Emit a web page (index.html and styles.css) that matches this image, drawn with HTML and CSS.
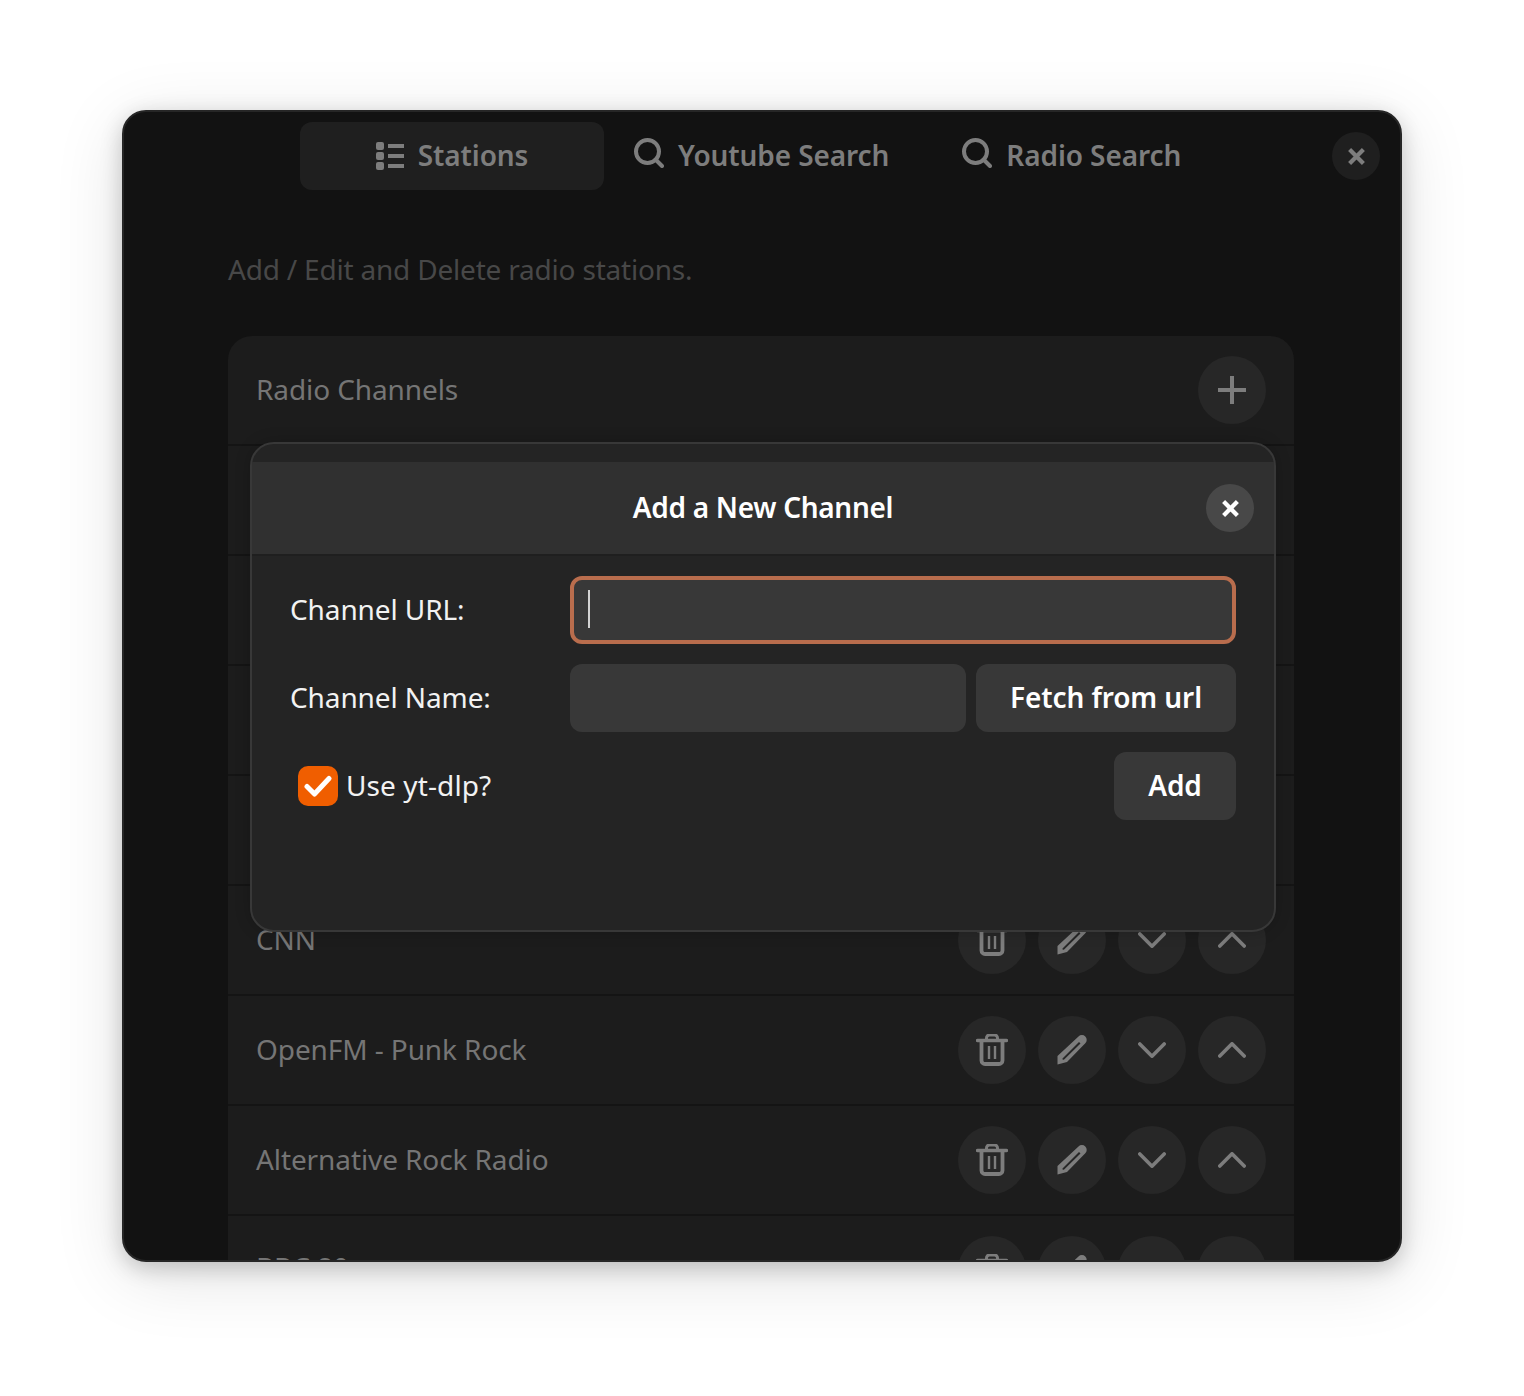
FILE: index.html
```html
<!DOCTYPE html>
<html lang="en">

<head>
    <meta charset="UTF-8">
    <meta name="viewport" content="width=device-width, initial-scale=1.0">
    <title>Radio Settings</title>
    <link rel="stylesheet" href="styles.css">
</head>

<body>

    <svg class="icon-defs" width="0" height="0">
        <symbol id="i-list" viewBox="0 0 28 28">
            <rect x="0" y="0" width="8" height="8" rx="2" />
            <rect x="0" y="10" width="8" height="8" rx="2" />
            <rect x="0" y="20" width="8" height="8" rx="2" />
            <rect x="12" y="2" width="16" height="4" />
            <rect x="12" y="12" width="16" height="4" />
            <rect x="12" y="22" width="16" height="4" />
        </symbol>
        <symbol id="i-search" viewBox="0 0 30 30">
            <circle cx="13.500" cy="13.500" r="11.500" fill="none" stroke="currentColor" stroke-width="4" />
            <path d="M21.500 21.500l6.500 6.500" fill="none" stroke="currentColor" stroke-width="4" stroke-linecap="round" />
        </symbol>
        <symbol id="i-close" viewBox="0 0 16 16">
            <path d="M1.500 1.500l13 13M14.500 1.500l-13 13" fill="none" stroke="currentColor" stroke-width="4" />
        </symbol>
        <symbol id="i-plus" viewBox="0 0 28 28">
            <path d="M14 0v28M0 14h28" fill="none" stroke="currentColor" stroke-width="4" />
        </symbol>
        <symbol id="i-trash" viewBox="0 0 32 32">
            <path d="M1.500 6.500h29" fill="none" stroke="currentColor" stroke-width="3.400" stroke-linecap="round" />
            <path d="M10.500 5.500v-1.500a3 3 0 0 1 3-3h5a3 3 0 0 1 3 3v1.500" fill="none" stroke="currentColor" stroke-width="3" />
            <path d="M5.500 7v19.500a3.500 3.500 0 0 0 3.500 3.500h14a3.500 3.500 0 0 0 3.500-3.500v-19.500" fill="none" stroke="currentColor" stroke-width="3.800" />
            <path d="M13 12v13M19 12v13" fill="none" stroke="currentColor" stroke-width="2.400" />
        </symbol>
        <symbol id="i-edit" viewBox="0 0 30 30">
            <path fill-rule="evenodd" d="M21.500 1.500a4.800 4.800 0 0 1 6.800 6.800L10 27l-9.500 2.500V21zM22 7L5.500 23.400v1.200l1.400.100L23.500 8.500z" />
        </symbol>
        <symbol id="i-down" viewBox="0 0 28 16">
            <path d="M1.800 2l12.200 12.200L26.200 2" fill="none" stroke="currentColor" stroke-width="3.600" stroke-linecap="round" stroke-linejoin="round" />
        </symbol>
        <symbol id="i-up" viewBox="0 0 28 16">
            <path d="M1.800 14L14 1.800 26.200 14" fill="none" stroke="currentColor" stroke-width="3.600" stroke-linecap="round" stroke-linejoin="round" />
        </symbol>
        <symbol id="i-check" viewBox="0 0 28 22">
            <path d="M3 11.500l7.500 7.500L25 3.500" fill="none" stroke="currentColor" stroke-width="5" stroke-linecap="round" stroke-linejoin="round" />
        </symbol>
    </svg>

    <div class="window">
        <header class="tabbar">
            <div class="tab tab-active">
                <svg class="icon-list"><use href="#i-list" /></svg>
                <span>Stations</span>
            </div>
            <div class="tab tab-youtube">
                <svg class="icon-search"><use href="#i-search" /></svg>
                <span>Youtube Search</span>
            </div>
            <div class="tab tab-radio">
                <svg class="icon-search"><use href="#i-search" /></svg>
                <span>Radio Search</span>
            </div>
            <button class="round-btn window-close"><svg class="icon-close"><use href="#i-close" /></svg></button>
        </header>

        <p class="subtitle">Add / Edit and Delete radio stations.</p>

        <div class="listbox">
            <div class="row row-head">
                <span class="row-name">Radio Channels</span>
                <div class="row-actions">
                    <button class="round-btn"><svg class="icon-plus"><use href="#i-plus" /></svg></button>
                </div>
            </div>
            <!-- these four are fully covered by the dialog -->
            <div class="row"></div>
            <div class="row"></div>
            <div class="row"></div>
            <div class="row"></div>
            <div class="row">
                <span class="row-name">CNN</span>
                <div class="row-actions">
                    <button class="round-btn"><svg class="icon-trash"><use href="#i-trash" /></svg></button>
                    <button class="round-btn"><svg class="icon-edit"><use href="#i-edit" /></svg></button>
                    <button class="round-btn"><svg class="icon-chevron"><use href="#i-down" /></svg></button>
                    <button class="round-btn"><svg class="icon-chevron"><use href="#i-up" /></svg></button>
                </div>
            </div>
            <div class="row">
                <span class="row-name">OpenFM - Punk Rock</span>
                <div class="row-actions">
                    <button class="round-btn"><svg class="icon-trash"><use href="#i-trash" /></svg></button>
                    <button class="round-btn"><svg class="icon-edit"><use href="#i-edit" /></svg></button>
                    <button class="round-btn"><svg class="icon-chevron"><use href="#i-down" /></svg></button>
                    <button class="round-btn"><svg class="icon-chevron"><use href="#i-up" /></svg></button>
                </div>
            </div>
            <div class="row">
                <span class="row-name">Alternative Rock Radio</span>
                <div class="row-actions">
                    <button class="round-btn"><svg class="icon-trash"><use href="#i-trash" /></svg></button>
                    <button class="round-btn"><svg class="icon-edit"><use href="#i-edit" /></svg></button>
                    <button class="round-btn"><svg class="icon-chevron"><use href="#i-down" /></svg></button>
                    <button class="round-btn"><svg class="icon-chevron"><use href="#i-up" /></svg></button>
                </div>
            </div>
            <div class="row">
                <span class="row-name">BBC 80</span>
                <div class="row-actions">
                    <button class="round-btn"><svg class="icon-trash"><use href="#i-trash" /></svg></button>
                    <button class="round-btn"><svg class="icon-edit"><use href="#i-edit" /></svg></button>
                    <button class="round-btn"><svg class="icon-chevron"><use href="#i-down" /></svg></button>
                    <button class="round-btn"><svg class="icon-chevron"><use href="#i-up" /></svg></button>
                </div>
            </div>
        </div>

        <div class="dialog">
            <div class="dialog-title">
                <h2>Add a New Channel</h2>
                <button class="round-btn dialog-close"><svg class="icon-close"><use href="#i-close" /></svg></button>
            </div>
            <div class="dialog-body">
                <div class="form-row">
                    <label class="form-label">Channel URL:</label>
                    <div class="field field-focus"><span class="caret"></span></div>
                </div>
                <div class="form-row">
                    <label class="form-label">Channel Name:</label>
                    <div class="field field-name"></div>
                    <button class="btn btn-fetch">Fetch from url</button>
                </div>
                <div class="form-row form-row-last">
                    <label class="check-label">
                        <span class="checkbox"><svg class="icon-check"><use href="#i-check" /></svg></span>
                        Use yt-dlp?
                    </label>
                    <button class="btn btn-add">Add</button>
                </div>
            </div>
        </div>
    </div>

</body>

</html>
```

FILE: styles.css
```css
* {
    padding: 0;
    margin: 0;
    box-sizing: border-box;
}

body {
    background-color: #fff;
    padding: 110px 122px;
    font-family: "Noto Sans", sans-serif;
    font-size: 28px;
    letter-spacing: -0.1px;
}

.icon-defs {
    position: absolute;
}

svg {
    display: block;
    fill: currentColor;
}

.window {
    position: relative;
    width: 1280px;
    height: 1152px;
    overflow: hidden;
    background-color: #121212;
    border: 2px solid #262626;
    border-radius: 24px;
    padding: 0 106px 0 104px;
    box-shadow: 0 6px 22px rgba(0, 0, 0, 0.2), 0 14px 70px rgba(0, 0, 0, 0.12);
}

/* top tabs */
.tabbar {
    display: flex;
    align-items: center;
    height: 68px;
    margin-top: 10px;
    margin-left: 72px;
    color: #7d7d7d;
    font-weight: 600;
}

.tab {
    display: flex;
    align-items: center;
    height: 68px;
}

.tab span {
    padding-bottom: 2px;
}

.tab-active {
    justify-content: center;
    gap: 14px;
    width: 304px;
    background-color: #1f1f1f;
    border-radius: 12px;
}

.tab-youtube {
    gap: 14px;
    margin-left: 30px;
}

.tab-radio {
    gap: 14px;
    margin-left: 73px;
}

.icon-list {
    width: 28px;
    height: 28px;
}

.icon-search {
    width: 30px;
    height: 30px;
    margin-top: -6px;
}

.round-btn {
    display: flex;
    justify-content: center;
    align-items: center;
    width: 68px;
    height: 68px;
    border: none;
    border-radius: 50%;
    background-color: #272727;
    color: #7d7d7d;
    flex-shrink: 0;
}

.window-close {
    position: absolute;
    top: 20px;
    right: 20px;
    width: 48px;
    height: 48px;
    background-color: #1f1f1f;
}

.icon-close {
    width: 17px;
    height: 17px;
}

.subtitle {
    margin-top: 58px;
    height: 44px;
    line-height: 42px;
    color: #484848;
    letter-spacing: -0.2px;
}

/* channel list */
.listbox {
    margin-top: 44px;
    background-color: #1c1c1c;
    border-radius: 24px 24px 0 0;
}

.row {
    display: flex;
    justify-content: space-between;
    align-items: center;
    height: 110px;
    padding: 0 28px;
    border-bottom: 2px solid #141414;
}

.row-name {
    padding-bottom: 2px;
    color: #757575;
}

.row:last-child .row-name {
    padding-bottom: 6px;
}

.row-actions {
    display: flex;
    gap: 12px;
}

.icon-plus {
    width: 28px;
    height: 28px;
}

.icon-trash {
    width: 32px;
    height: 32px;
}

.icon-edit {
    width: 30px;
    height: 30px;
}

.icon-chevron {
    width: 28px;
    height: 16px;
}

/* dialog on top of the list */
.dialog {
    position: absolute;
    top: 330px;
    left: 126px;
    width: 1026px;
    height: 490px;
    background-color: #242424;
    border: 2px solid #383838;
    border-radius: 24px;
    padding-top: 18px;
    box-shadow: 0 0 16px rgba(0, 0, 0, 0.2);
}

.dialog-title {
    position: relative;
    display: flex;
    justify-content: center;
    align-items: center;
    height: 94px;
    background-color: #303030;
    border-bottom: 2px solid #1f1f1f;
    color: #fff;
}

.dialog-title h2 {
    padding-bottom: 2px;
    font-size: 28px;
    font-weight: 600;
    letter-spacing: -0.3px;
}

.dialog-close {
    position: absolute;
    top: 22px;
    right: 20px;
    width: 48px;
    height: 48px;
    background-color: #484848;
    color: #fff;
}

.dialog-body {
    display: flex;
    flex-direction: column;
    gap: 20px;
    padding: 20px 38px 0;
}

.form-row {
    display: flex;
    align-items: center;
    gap: 10px;
    height: 68px;
}

.form-label {
    width: 280px;
    margin-right: -10px;
    padding-bottom: 2px;
    color: #f2f2f2;
}

.field {
    height: 68px;
    border-radius: 12px;
    background-color: #383838;
}

.field-focus {
    width: 666px;
    padding: 10px 14px;
    border: 4px solid #b96d4d;
}

.caret {
    display: block;
    width: 2px;
    height: 38px;
    background-color: #d2d2d2;
}

.field-name {
    width: 396px;
}

.btn {
    height: 68px;
    padding-bottom: 2px;
    border: none;
    border-radius: 12px;
    background-color: #383838;
    color: #fff;
    font-family: inherit;
    font-size: 28px;
    font-weight: 600;
    letter-spacing: inherit;
}

.btn-fetch {
    width: 260px;
}

.form-row-last {
    justify-content: space-between;
}

.check-label {
    display: flex;
    align-items: center;
    gap: 8px;
    margin-left: 8px;
    padding-bottom: 2px;
    color: #f2f2f2;
    letter-spacing: 0.1px;
}

.checkbox {
    display: flex;
    justify-content: center;
    align-items: center;
    width: 40px;
    height: 40px;
    margin-top: 2px;
    border-radius: 10px;
    background-color: #f05e00;
    color: #fff;
}

.icon-check {
    width: 28px;
    height: 22px;
}

.btn-add {
    width: 122px;
}
```
